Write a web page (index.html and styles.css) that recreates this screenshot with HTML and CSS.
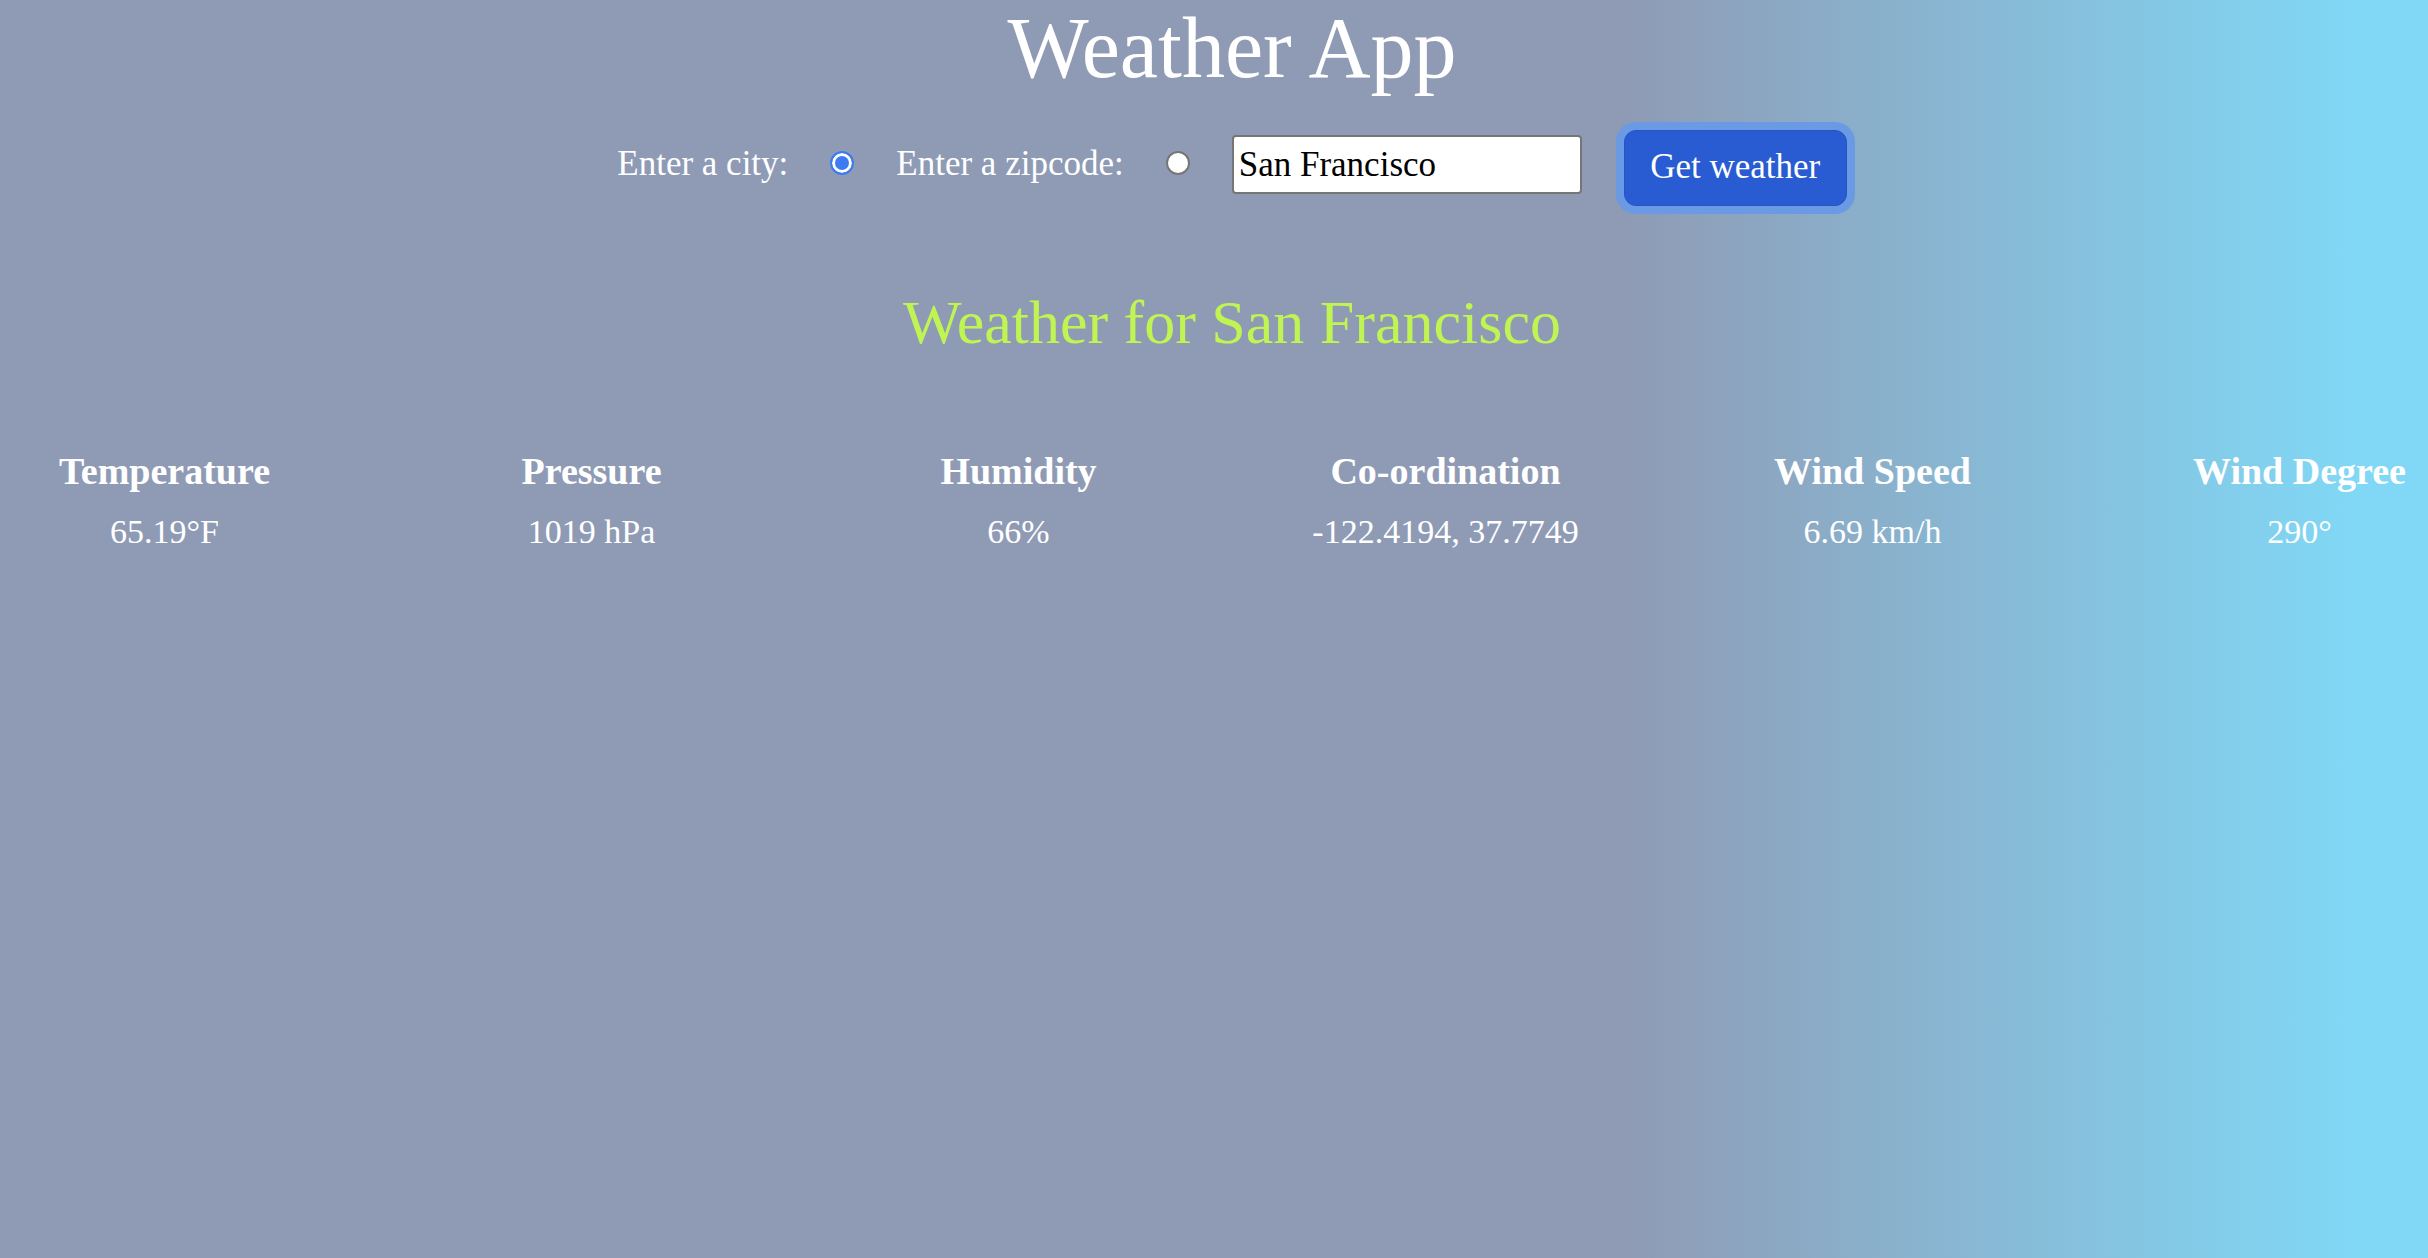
FILE: index.html
```html
<!DOCTYPE html>
<html lang="en">
<head>
<meta charset="utf-8">
<title>Weather App</title>
<link rel="stylesheet" href="styles.css">
</head>
<body>
<div class="page">
  <h1 class="title">Weather App</h1>
  <form class="search">
    <label class="search-label" for="city">Enter a city:</label>
    <input class="radio" type="radio" id="city" name="mode" checked>
    <label class="search-label" for="zip">Enter a zipcode:</label>
    <input class="radio" type="radio" id="zip" name="mode">
    <input class="search-input" type="text" value="San Francisco">
    <button class="search-button" type="button">Get weather</button>
  </form>
  <h2 class="location">Weather for San Francisco</h2>
  <div class="stats">
    <div class="stat"><div class="stat-name">Temperature</div><div class="stat-value">65.19°F</div></div>
    <div class="stat"><div class="stat-name">Pressure</div><div class="stat-value">1019 hPa</div></div>
    <div class="stat"><div class="stat-name">Humidity</div><div class="stat-value">66%</div></div>
    <div class="stat"><div class="stat-name">Co-ordination</div><div class="stat-value">-122.4194, 37.7749</div></div>
    <div class="stat"><div class="stat-name">Wind Speed</div><div class="stat-value">6.69 km/h</div></div>
    <div class="stat"><div class="stat-name">Wind Degree</div><div class="stat-value">290°</div></div>
  </div>
</div>
</body>
</html>
```

FILE: styles.css
```css
html {
  height: 100%;
  overflow: hidden;
  background: linear-gradient(to right, #8f9bb5 0%, #8f9bb5 67%, #80d8f6 97%, #80d8f6 100%);
}

body {
  margin: 0;
  font-family: "Liberation Serif", "Times New Roman", serif;
  color: #ffffff;
}

.page {
  width: 2464px;
  text-align: center;
}

.title {
  margin: 0;
  font-size: 86px;
  font-weight: normal;
  line-height: 96px;
}

.search {
  margin: 34px 0 0;
  display: flex;
  justify-content: center;
  align-items: center;
  gap: 42px;
  height: 76px;
}

.search-label {
  font-size: 35px;
  line-height: 40px;
  margin-bottom: 8px;
}

.radio {
  appearance: none;
  -webkit-appearance: none;
  flex: 0 0 24px;
  margin: 0 0 10px;
  width: 24px;
  height: 24px;
  border-radius: 50%;
  border: 2px solid #767676;
  background: #ffffff;
  box-sizing: border-box;
}

.radio:checked {
  border-color: #3d7bf3;
  background: #3d7bf3;
  box-shadow: inset 0 0 0 3px #ffffff;
}

.search-input {
  box-sizing: border-box;
  width: 350px;
  height: 59px;
  margin: 0 0 7px;
  padding: 0 4px 0 5px;
  border: 2px solid #767676;
  border-radius: 4px;
  background: #ffffff;
  color: #000000;
  font: 35px "Liberation Serif", "Times New Roman", serif;
  outline: none;
}

.search-button {
  box-sizing: border-box;
  width: 223px;
  height: 76px;
  padding: 16px 0 20px;
  border: 1px solid #2754c4;
  border-radius: 12px;
  background: #295bd2;
  color: #ffffff;
  font: 35px/40px "Liberation Serif", "Times New Roman", serif;
  box-shadow: 0 0 0 8px #6a9ae4;
}

.location {
  margin: 80px 0 0;
  font-size: 62px;
  font-weight: normal;
  line-height: 72px;
  color: #bff452;
}

.stats {
  margin-top: 91px;
  display: flex;
  justify-content: center;
}

.stat {
  flex: 0 0 427px;
}

.stat-name {
  font-size: 38px;
  font-weight: bold;
  line-height: 44px;
}

.stat-value {
  margin-top: 17px;
  font-size: 34px;
  line-height: 44px;
}
```
